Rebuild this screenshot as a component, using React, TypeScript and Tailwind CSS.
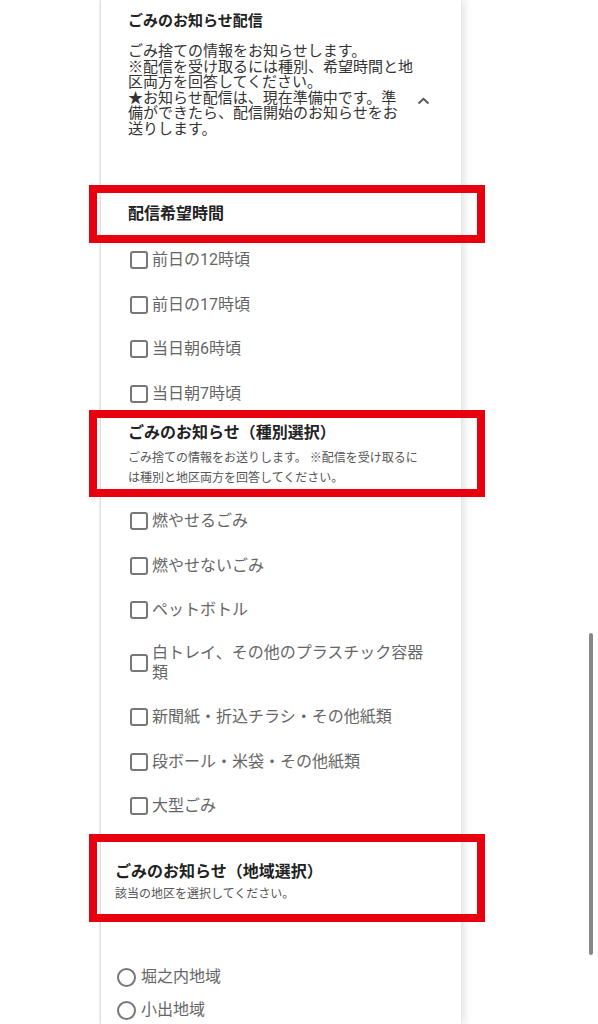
const FONT = "font-['Roboto','Noto_Sans_CJK_JP',sans-serif]";

const TIMES = ["前日の12時頃", "前日の17時頃", "当日朝6時頃", "当日朝7時頃"];

const KINDS: string[][] = [
  ["燃やせるごみ"],
  ["燃やせないごみ"],
  ["ペットボトル"],
  ["白トレイ、その他のプラスチック容器", "類"],
  ["新聞紙・折込チラシ・その他紙類"],
  ["段ボール・米袋・その他紙類"],
  ["大型ごみ"],
];

const AREAS = ["堀之内地域", "小出地域"];

function CheckRow({ lines }: { lines: string[] }) {
  return (
    <label className={`flex items-center gap-[4px] ${lines.length > 1 ? "pb-[2px]" : ""}`}>
      <span className="w-[18px] h-[18px] shrink-0 rounded-[3px] border-2 border-[#777] bg-white" />
      <span className="text-[16px] leading-[20px] text-[#666] min-h-[24px] flex flex-col justify-center">
        {lines.map((l, i) => (
          <span key={i}>{l}</span>
        ))}
      </span>
    </label>
  );
}

function RadioRow({ label }: { label: string }) {
  return (
    <label className="flex items-center gap-[5px] h-[24px]">
      <span className="w-[19px] h-[19px] shrink-0 rounded-full border-2 border-[#777] bg-white" />
      <span className="text-[16px] leading-[20px] text-[#666]">{label}</span>
    </label>
  );
}

export default function App() {
  return (
    <div className={`relative h-[1024px] w-full overflow-hidden bg-white ${FONT}`}>
      <div className="ml-[101px] w-[360px] min-h-[1024px] bg-white shadow-[3px_0_8px_rgba(0,0,0,0.12),-1px_0_2px_rgba(0,0,0,0.14)]">
        {/* お知らせ配信 */}
        <div className="pt-[10px] pl-[27px] pr-[30px]">
          <h2 className="text-[15px] leading-[22px] font-bold text-[#222]">ごみのお知らせ配信</h2>
          <div className="mt-[12px] flex items-start justify-between">
            <p className="text-[15px] leading-[15.5px] text-[#333]">
              ごみ捨ての情報をお知らせします。
              <br />
              ※配信を受け取るには種別、希望時間と地
              <br />
              区両方を回答してください。
              <br />
              ★お知らせ配信は、現在準備中です。準
              <br />
              備ができたら、配信開始のお知らせをお
              <br />
              送りします。
            </p>
            <svg width="13" height="8" viewBox="0 0 13 8" className="mt-[53px] mr-[1px]">
              <path d="M1.5 6.5 L6.5 1.8 L11.5 6.5" fill="none" stroke="#555" strokeWidth="1.8" />
            </svg>
          </div>
        </div>

        {/* 配信希望時間 */}
        <div className="mt-[48px] ml-[-12px] mr-[-24px] h-[58px] border-8 border-[#e8000e] flex items-center pl-[31px]">
          <h3 className="text-[16px] leading-[22px] font-bold text-[#222]">配信希望時間</h3>
        </div>
        <div className="mt-[5px] pl-[29px] flex flex-col gap-[20.5px]">
          {TIMES.map((t) => (
            <CheckRow key={t} lines={[t]} />
          ))}
        </div>

        {/* 種別選択 */}
        <div className="mt-[4.5px] ml-[-12px] mr-[-24px] h-[87px] border-8 border-[#e8000e] pl-[31px] pt-[4px]">
          <h3 className="text-[16px] leading-[22px] font-bold text-[#222]">ごみのお知らせ（種別選択）</h3>
          <p className="mt-[4px] text-[12px] leading-[20px] text-[#555]">
            ごみ捨ての情報をお送りします。 ※配信を受け取るに
            <br />
            は種別と地区両方を回答してください。
          </p>
        </div>
        <div className="mt-[12px] pl-[29px] flex flex-col gap-[20.5px]">
          {KINDS.map((k) => (
            <CheckRow key={k.join("")} lines={k} />
          ))}
        </div>

        {/* 地域選択 */}
        <div className="mt-[16px] ml-[-12px] mr-[-24px] h-[88px] border-8 border-[#e8000e] pl-[18px] pt-[19px]">
          <h3 className="text-[16px] leading-[22px] font-bold text-[#222]">ごみのお知らせ（地域選択）</h3>
          <p className="mt-[1px] text-[12px] leading-[20px] text-[#555]">該当の地区を選択してください。</p>
        </div>
        <div className="mt-[43px] pl-[16px] flex flex-col gap-[9px]">
          {AREAS.map((a) => (
            <RadioRow key={a} label={a} />
          ))}
        </div>
      </div>

      {/* scrollbar */}
      <div className="absolute left-[589px] top-[633px] w-[4px] h-[322px] rounded-full bg-[#888]" />
    </div>
  );
}
